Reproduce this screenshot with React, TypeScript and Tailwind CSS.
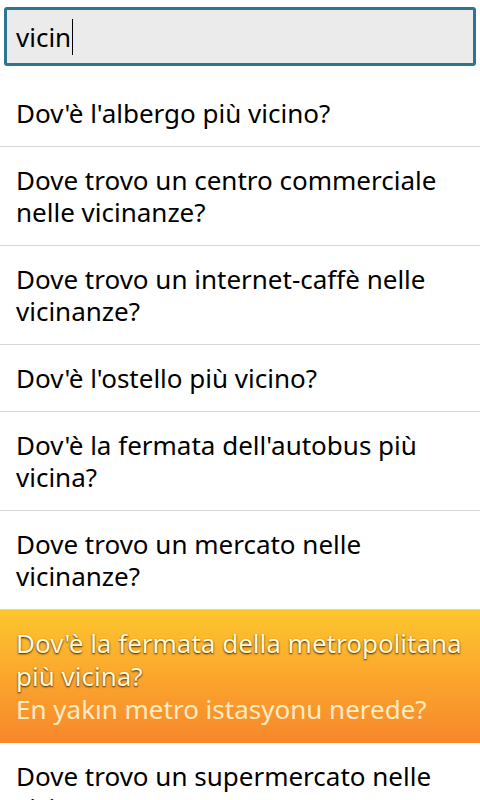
import { useState } from "react";

type Phrase = { it: string; tr: string };

const PHRASES: Phrase[] = [
  { it: "Dov'è l'albergo più vicino?", tr: "En yakın otel nerede?" },
  { it: "Dove trovo un centro commerciale nelle vicinanze?", tr: "Yakınlarda bir alışveriş merkezi var mı?" },
  { it: "Dove trovo un internet-caffè nelle vicinanze?", tr: "Yakınlarda bir internet kafe var mı?" },
  { it: "Dov'è l'ostello più vicino?", tr: "En yakın hostel nerede?" },
  { it: "Dov'è la fermata dell'autobus più vicina?", tr: "En yakın otobüs durağı nerede?" },
  { it: "Dove trovo un mercato nelle vicinanze?", tr: "Yakınlarda bir pazar var mı?" },
  { it: "Dov'è la fermata della metropolitana più vicina?", tr: "En yakın metro istasyonu nerede?" },
  { it: "Dove trovo un supermercato nelle vicinanze?", tr: "Yakınlarda bir süpermarket var mı?" },
];

export default function App() {
  const [query, setQuery] = useState("vicin");
  const [selected, setSelected] = useState(6);

  return (
    <div className="h-[800px] w-[480px] overflow-hidden bg-white font-['Noto_Sans','Open_Sans',sans-serif] text-black">
      <div className="px-1 pb-[14px] pt-[7px]">
        <div className="flex h-[59px] items-center rounded-[3px] border-[3px] border-[#2d7591] bg-[#ebebeb] px-[9px]">
          <span className="text-[26px] leading-none">{query}</span>
          <span className="ml-[1px] h-[36px] w-[1px] bg-black" />
          <input value={query} onChange={(e) => setQuery(e.target.value)} className="hidden" />
        </div>
      </div>

      <div>
        {PHRASES.map((p, i) =>
          i === selected ? (
            <div
              key={i}
              onClick={() => setSelected(-1)}
              className="bg-gradient-to-b from-[#fcc62e] to-[#f7862b] px-4 pb-[17px] pt-[17px] text-[26px] leading-[33px]"
            >
              <div className="text-[#fff7d6] [text-shadow:0_1px_2px_rgba(60,25,0,1)]">{p.it}</div>
              <div className="text-[#fdebc4]">{p.tr}</div>
            </div>
          ) : (
            <div
              key={i}
              onClick={() => setSelected(i)}
              className="border-b border-[#d6d6d6] px-4 py-[17px] text-[26px] leading-[32px]"
            >
              {p.it}
            </div>
          )
        )}
      </div>
    </div>
  );
}
